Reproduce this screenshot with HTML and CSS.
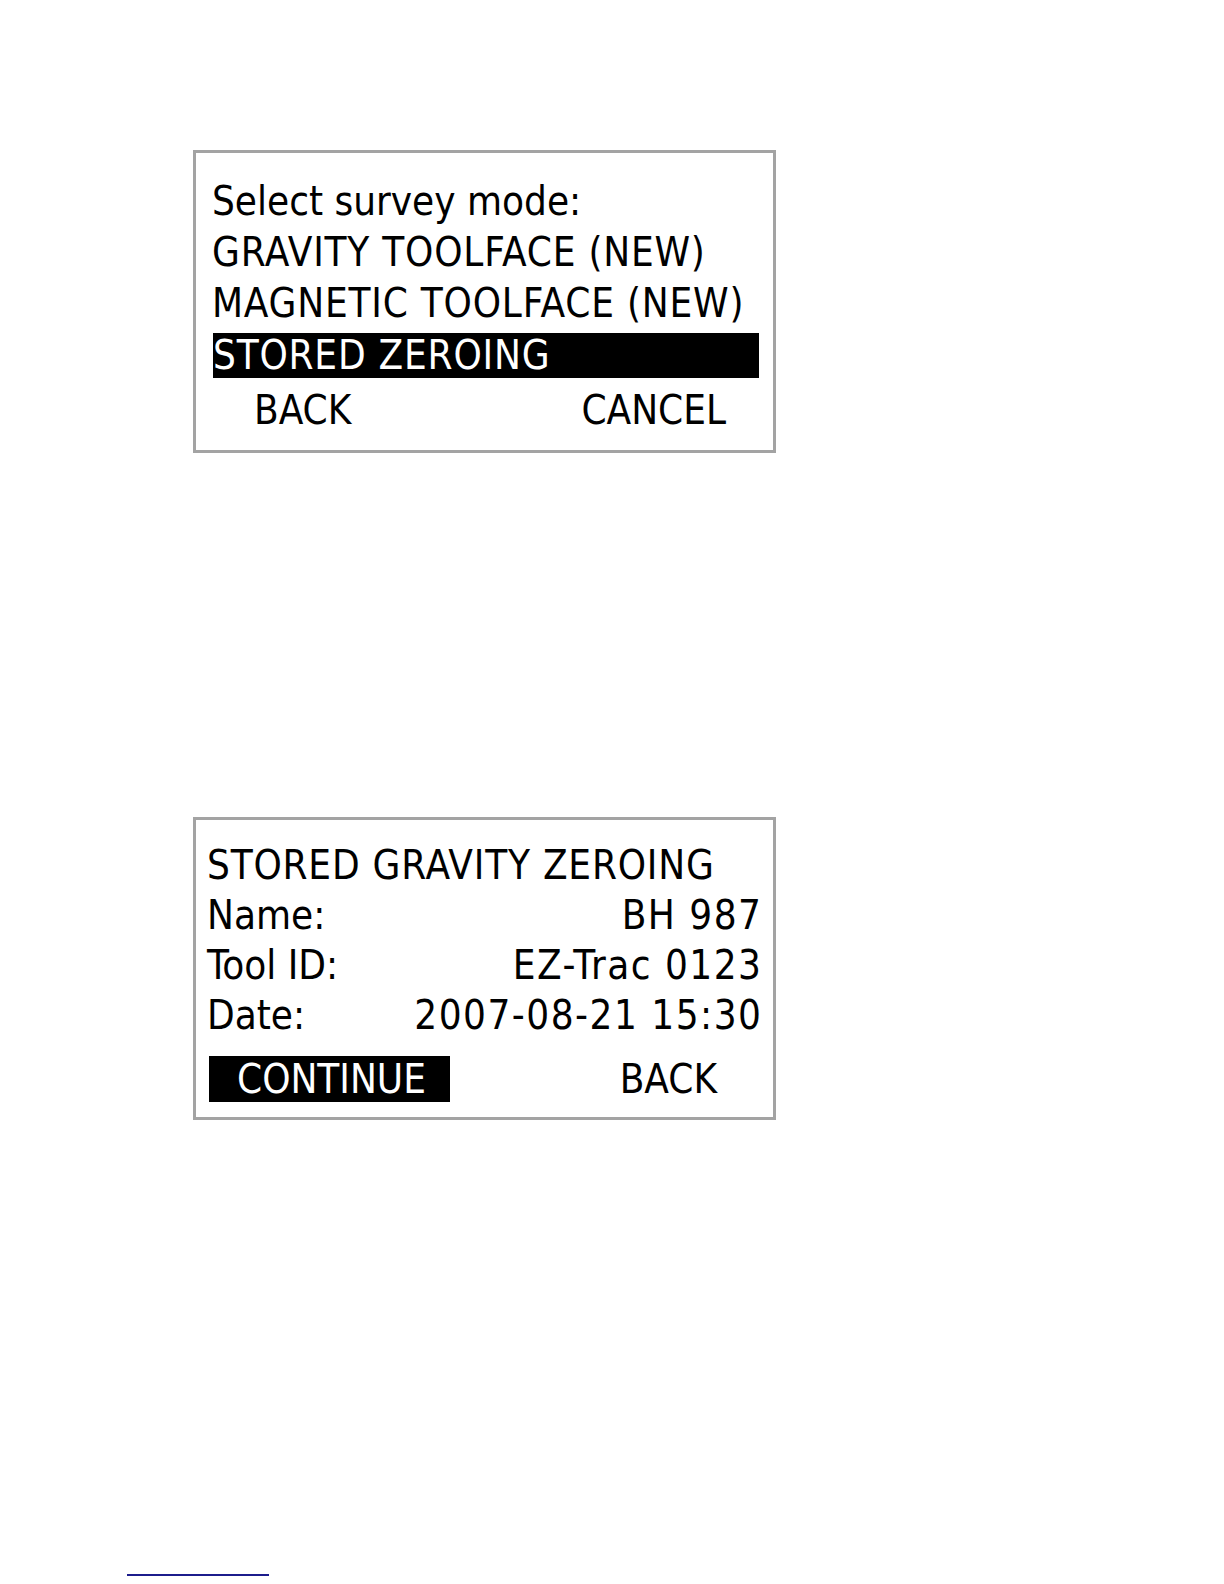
FILE: index.html
```html
<!DOCTYPE html>
<html>
<head>
<meta charset="utf-8">
<link rel="stylesheet" href="styles.css">
</head>
<body>
<div class="page">
  <div class="screen screen-one">
    <div class="row">Select survey mode:</div>
    <div class="row caps">GRAVITY TOOLFACE (NEW)</div>
    <div class="row caps">MAGNETIC TOOLFACE (NEW)</div>
    <div class="row caps selected">STORED ZEROING</div>
    <div class="softkeys softkeys-one">
      <span>BACK</span>
      <span>CANCEL</span>
    </div>
  </div>

  <div class="screen screen-two">
    <div class="row caps">STORED GRAVITY ZEROING</div>
    <div class="row pair"><span>Name:</span><span class="value">BH 987</span></div>
    <div class="row pair"><span>Tool ID:</span><span class="value">EZ-Trac 0123</span></div>
    <div class="row pair"><span>Date:</span><span class="value">2007-08-21 15:30</span></div>
    <div class="softkeys softkeys-two">
      <span class="key-selected">CONTINUE</span>
      <span class="key-back">BACK</span>
    </div>
  </div>

  <div class="footer-line"></div>
</div>
</body>
</html>
```

FILE: styles.css
```css
html, body {
  margin: 0;
  padding: 0;
  background: #ffffff;
}

.page {
  width: 1224px;
  height: 1584px;
  box-sizing: border-box;
  padding-top: 150px;
  padding-left: 193px;
  display: flex;
  flex-direction: column;
  align-items: flex-start;
}

.screen {
  box-sizing: border-box;
  width: 583px;
  border: 3px solid #a3a3a3;
  background: #ffffff;
  color: #000000;
  font-family: "DejaVu Sans Condensed", "DejaVu Sans", sans-serif;
  font-stretch: condensed;
  font-size: 40px;
  display: flex;
  flex-direction: column;
}

.row {
  line-height: 51px;
  height: 51px;
  white-space: nowrap;
}

.caps {
  letter-spacing: 0.8px;
}

.value {
  letter-spacing: 1.5px;
  margin-right: -1.5px;
}

.screen-one {
  height: 303px;
  padding: 23px 14px 0 16px;
}

.screen-one .selected {
  background: #000000;
  color: #ffffff;
  height: 45px;
  line-height: 45px;
  margin-top: 4px;
  margin-left: 1px;
}

.softkeys {
  display: flex;
  justify-content: space-between;
  white-space: nowrap;
}

.softkeys-one {
  margin-top: 7px;
  line-height: 51px;
  padding: 0 33px 0 42px;
}

.screen-two {
  margin-top: 364px;
  height: 303px;
  padding: 20px 12px 0 11px;
}

.screen-two .row {
  height: 50px;
  line-height: 50px;
}

.pair {
  display: flex;
  justify-content: space-between;
}

.softkeys-two {
  margin-top: 16px;
  align-items: center;
}

.key-selected {
  background: #000000;
  color: #ffffff;
  width: 241px;
  height: 46px;
  line-height: 46px;
  margin-left: 2px;
  box-sizing: border-box;
  padding-left: 28px;
}

.key-back {
  margin-right: 44px;
  line-height: 46px;
}

.footer-line {
  margin-top: 454px;
  margin-left: -66px;
  width: 142px;
  height: 2px;
  background: #1c1c8c;
}
```
